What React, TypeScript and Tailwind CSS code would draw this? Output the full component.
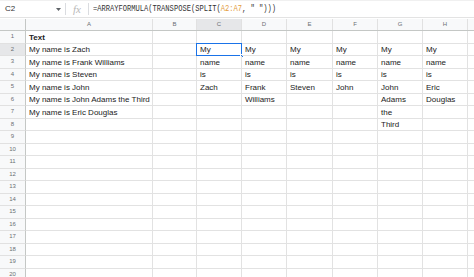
import React from "react";

const cols = [
  { k: "A", w: 127 },
  { k: "B", w: 44 },
  { k: "C", w: 45 },
  { k: "D", w: 45 },
  { k: "E", w: 46 },
  { k: "F", w: 45 },
  { k: "G", w: 45 },
  { k: "H", w: 45 },
  { k: "I", w: 40 },
];

const data: Record<number, Record<string, string>> = {
  1: { A: "Text" },
  2: { A: "My name is Zach", C: "My", D: "My", E: "My", F: "My", G: "My", H: "My" },
  3: { A: "My name is Frank Williams", C: "name", D: "name", E: "name", F: "name", G: "name", H: "name" },
  4: { A: "My name is Steven", C: "is", D: "is", E: "is", F: "is", G: "is", H: "is" },
  5: { A: "My name is John", C: "Zach", D: "Frank", E: "Steven", F: "John", G: "John", H: "Eric" },
  6: { A: "My name is John Adams the Third", D: "Williams", G: "Adams", H: "Douglas" },
  7: { A: "My name is Eric Douglas", G: "the" },
  8: { G: "Third" },
};

const rows = Array.from({ length: 20 }, (_, i) => i + 1);

export default function App() {
  return (
    <div
      className="w-[474px] h-[277px] overflow-hidden bg-white text-[#222]"
      style={{ fontFamily: '"Liberation Sans", Arial, sans-serif' }}
    >
      {/* formula bar */}
      <div className="h-[18px] flex items-center border-b border-[#e3e3e3] border-t border-t-[#f0f0f0]">
        <div className="w-[52px] pl-[5px] text-[8px] text-[#333]">C2</div>
        <div className="w-[13px] flex items-center justify-center">
          <svg width="5" height="3" viewBox="0 0 5 3">
            <path d="M0 0 L5 0 L2.5 3 Z" fill="#5f6368" />
          </svg>
        </div>
        <div className="w-px h-[12px] bg-[#dadce0]" />
        <div
          className="w-[22px] text-center text-[11px] italic text-[#b8b8b8] leading-none"
          style={{ fontFamily: '"Liberation Serif", serif' }}
        >
          fx
        </div>
        <div className="w-px h-[12px] bg-[#dadce0]" />
        <div
          className="pl-[4px] text-[7.1px] text-[#333] whitespace-pre scale-y-125 origin-left"
          style={{ fontFamily: '"Liberation Mono", monospace' }}
        >
          =ARRAYFORMULA(TRANSPOSE(SPLIT(<span className="text-[#e39b3a]">A2:A7</span>, " ")))
        </div>
      </div>
      <div className="h-px" />
      {/* column header */}
      <div className="flex h-[12px] bg-[#f8f9fa] border-b border-[#c4c7c5]">
        <div className="w-[26px] shrink-0 border-r border-[#c4c7c5] bg-[#f8f9fa]" />
        {cols.map((c) => (
          <div
            key={c.k}
            className={`shrink-0 flex items-center justify-center text-[6px] text-[#6b6f73] border-r border-[#e1e1e1] ${
              c.k === "C" ? "bg-[#e6e7e9]" : ""
            }`}
            style={{ width: c.w }}
          >
            {c.k === "I" ? "" : c.k}
          </div>
        ))}
      </div>
      {rows.map((r) => (
        <div key={r} className="flex h-[12.5px]">
          <div
            className={`w-[26px] shrink-0 flex items-center justify-center text-[6px] text-[#6b6f73] border-r border-r-[#c4c7c5] border-b border-b-[#e1e1e1] ${
              r === 2 ? "bg-[#e6e7e9]" : "bg-[#f8f9fa]"
            }`}
          >
            {r}
          </div>
          {cols.map((c) => {
            const v = data[r]?.[c.k];
            const sel = r === 2 && c.k === "C";
            return (
              <div
                key={c.k}
                className={`relative shrink-0 flex items-end pl-[3px] pb-[1px] text-[8px] leading-none whitespace-nowrap overflow-visible border-r border-b border-[#e2e2e2] ${
                  r === 1 ? "font-bold" : ""
                }`}
                style={{ width: c.w }}
              >
                {v}
                {sel && (
                  <>
                    <div className="absolute -left-px -top-px -right-px -bottom-px border-[1.5px] border-[#1a73e8]" />
                    <div className="absolute -right-[3px] -bottom-[3px] w-[4px] h-[4px] bg-[#1a73e8] border border-white" />
                  </>
                )}
              </div>
            );
          })}
        </div>
      ))}
    </div>
  );
}
